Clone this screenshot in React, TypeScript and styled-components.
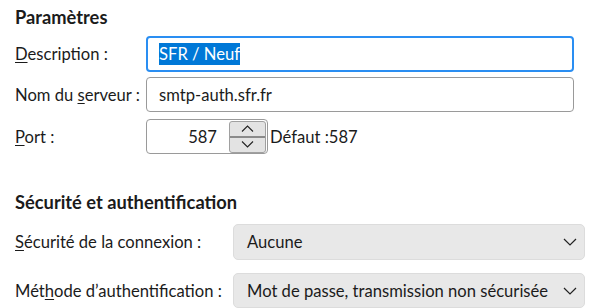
import React from "react";
import styled, { createGlobalStyle } from "styled-components";

const Global = createGlobalStyle`
  html, body { margin: 0; padding: 0; background: #ffffff; }
  body {
    font-family: Lato, "Noto Sans", sans-serif;
    font-size: 16.6px;
    color: #1b1b1b;
  }
`;

const Page = styled.div`
  width: 596px;
  height: 308px;
  box-sizing: border-box;
  padding: 6px 0 0 15px;
  overflow: hidden;
`;

const Heading = styled.div<{ $top?: number }>`
  font-weight: 700;
  font-size: 18.3px;
  height: 22px;
  line-height: 22px;
  margin-top: ${(p) => p.$top ?? 0}px;
`;

const Row = styled.div<{ $label: number; $gap: number }>`
  display: grid;
  grid-template-columns: ${(p) => p.$label}px auto;
  align-items: center;
  margin-top: ${(p) => p.$gap}px;
`;

const Label = styled.label`
  white-space: nowrap;
  u { text-decoration: underline; text-underline-offset: 2px; text-decoration-thickness: 1px; }
`;

const TextBox = styled.div<{ $focused?: boolean }>`
  box-sizing: border-box;
  width: 428px;
  height: ${(p) => (p.$focused ? 36 : 35)}px;
  border: ${(p) => (p.$focused ? "2px solid #2a8ef2" : "1px solid #9a9a9a")};
  border-radius: 4px;
  padding-left: ${(p) => (p.$focused ? 11 : 12)}px;
  display: flex;
  align-items: center;
  background: #fff;
`;

const Selected = styled.span`
  background: #0078d7;
  color: #fff;
  line-height: 22px;
`;

const PortLine = styled.div`
  display: flex;
  align-items: center;
`;

const PortBox = styled.div`
  box-sizing: border-box;
  width: 122px;
  height: 35px;
  border: 1px solid #9a9a9a;
  border-radius: 4px;
  display: flex;
  align-items: center;
  justify-content: flex-end;
  padding-right: 1px;
`;

const PortValue = styled.span`
  margin-right: 12px;
`;

const Spin = styled.div`
  box-sizing: border-box;
  width: 37px;
  height: 32px;
  display: flex;
  flex-direction: column;
  border: 1px solid #a0a0a0;
  border-radius: 3px;
  background: #e3e3e3;
  overflow: hidden;
`;

const SpinBtn = styled.div<{ $down?: boolean }>`
  flex: 1;
  display: flex;
  align-items: center;
  justify-content: center;
  border-top: ${(p) => (p.$down ? "2px solid #8a8a8a" : "none")};
`;

const Hint = styled.span`
  margin-left: 2px;
`;

const SelectBox = styled.div<{ $h: number }>`
  box-sizing: border-box;
  width: 352px;
  height: ${(p) => p.$h}px;
  background: #e8e8e8;
  border: 1px solid #dcdcdc;
  border-radius: 5px;
  display: flex;
  align-items: center;
  justify-content: space-between;
  padding: 0 7px 0 13px;
`;

const Chevron = () => (
  <svg width="14" height="8" viewBox="0 0 14 8" fill="none">
    <path d="M1 1 L7 7 L13 1" stroke="#222" strokeWidth="1.2" />
  </svg>
);

const SmallChev = ({ up }: { up?: boolean }) => (
  <svg width="13" height="7" viewBox="0 0 13 7" fill="none">
    <path
      d={up ? "M1 6.5 L6.5 1 L12 6.5" : "M1 0.5 L6.5 6 L12 0.5"}
      stroke="#222"
      strokeWidth="1.1"
    />
  </svg>
);

export default function App() {
  return (
    <>
      <Global />
      <Page>
        <Heading>Paramètres</Heading>
        <Row $label={131} $gap={8}>
          <Label>
            <u>D</u>escription :
          </Label>
          <TextBox $focused>
            <Selected>SFR / Neuf</Selected>
          </TextBox>
        </Row>
        <Row $label={131} $gap={5}>
          <Label>
            Nom du <u>s</u>erveur :
          </Label>
          <TextBox>smtp-auth.sfr.fr</TextBox>
        </Row>
        <Row $label={131} $gap={7}>
          <Label>
            <u>P</u>ort :
          </Label>
          <PortLine>
            <PortBox>
              <PortValue>587</PortValue>
              <Spin>
                <SpinBtn>
                  <SmallChev up />
                </SpinBtn>
                <SpinBtn $down>
                  <SmallChev />
                </SpinBtn>
              </Spin>
            </PortBox>
            <Hint>Défaut :587</Hint>
          </PortLine>
        </Row>
        <Heading $top={37}>Sécurité et authentification</Heading>
        <Row $label={218} $gap={11}>
          <Label>
            <u>S</u>écurité de la connexion :
          </Label>
          <SelectBox $h={36}>
            <span>Aucune</span>
            <Chevron />
          </SelectBox>
        </Row>
        <Row $label={218} $gap={13}>
          <Label>
            Mét<u>h</u>ode d’authentification :
          </Label>
          <SelectBox $h={35}>
            <span>Mot de passe, transmission non sécurisée</span>
            <Chevron />
          </SelectBox>
        </Row>
      </Page>
    </>
  );
}
